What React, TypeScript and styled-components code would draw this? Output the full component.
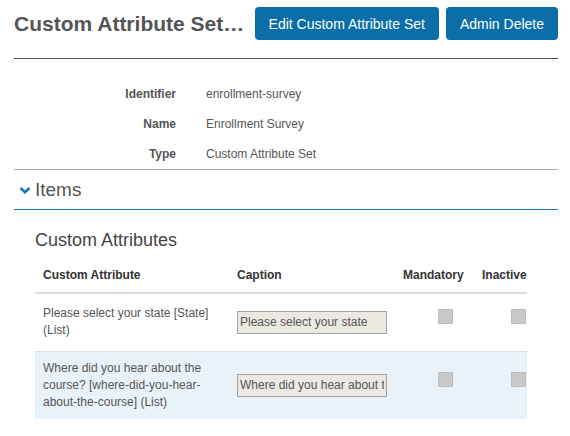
import React from 'react'
import styled, { createGlobalStyle } from 'styled-components'

const GlobalStyle = createGlobalStyle`
  body {
    margin: 0;
    background: #fff;
    font-family: 'Liberation Sans', Arial, sans-serif;
    color: #555;
  }
`

const Page = styled.div`
  padding: 7px 12px 0 14px;
`
const Header = styled.div`
  display: flex;
  align-items: center;
  gap: 7px;
`
const Title = styled.h1`
  flex: 1;
  min-width: 0;
  margin: 0 2px 0 0;
  font-size: 21px;
  font-weight: bold;
  color: #555;
  white-space: nowrap;
  overflow: hidden;
  text-overflow: ellipsis;
`
const ActionButton = styled.button`
  height: 33px;
  padding: 0 14px;
  border: none;
  border-radius: 4px;
  background-color: #0b6ea8;
  color: #fff;
  font-family: inherit;
  font-size: 14px;
  white-space: nowrap;
`
const Divider = styled.hr`
  margin: 18px 0 0 0;
  border: none;
  border-top: 1px solid #555;
`
const Details = styled.dl`
  display: grid;
  grid-template-columns: 162px 1fr;
  grid-auto-rows: 30px;
  column-gap: 30px;
  margin: 20px 0 0 0;
  font-size: 12px;
`
const Label = styled.dt`
  display: flex;
  align-items: center;
  justify-content: flex-end;
  font-weight: bold;
`
const Value = styled.dd`
  display: flex;
  align-items: center;
  margin: 0;
`
const SectionHeader = styled.div`
  display: flex;
  align-items: center;
  gap: 4px;
  height: 39px;
  border-top: 1px solid #aaa;
  border-bottom: 1px solid #1a78b4;
  padding-left: 5px;
  font-size: 19px;
  color: #555;
`
const Section = styled.div`
  padding: 20px 31px 0 21px;
`
const SubHeading = styled.h2`
  margin: 0 0 8px 0;
  font-size: 18px;
  line-height: 20px;
  font-weight: normal;
  color: #444;
`
const Table = styled.table`
  width: 100%;
  border-collapse: collapse;
  table-layout: fixed;
  font-size: 12px;
`
const HeadCell = styled.th<{ $w?: number }>`
  ${p => (p.$w ? `width: ${p.$w}px;` : '')}
  box-sizing: border-box;
  padding: 9px 8px 8px 8px;
  line-height: 17px;
  text-align: left;
  font-weight: bold;
  color: #333;
  border-bottom: 2px solid #ddd;
`
const Row = styled.tr<{ $striped?: boolean }>`
  background-color: ${p => (p.$striped ? '#eaf2f9' : 'transparent')};
  border-top: 1px solid #ddd;
`
const Cell = styled.td<{ $indent?: number }>`
  height: 58px;
  box-sizing: border-box;
  padding: 8px 8px 8px ${p => p.$indent ?? 8}px;
  line-height: 17px;
  vertical-align: middle;
  color: #555;
`
const CaptionInput = styled.input`
  display: block;
  box-sizing: border-box;
  width: 150px;
  height: 23px;
  padding: 0 2px;
  border: 1px solid #a3a3a3;
  background-color: #ebe9e1;
  font-family: inherit;
  font-size: 12px;
  color: #555;
  outline: none;
`
const Check = styled.span`
  display: block;
  width: 15px;
  height: 15px;
  box-sizing: border-box;
  margin-bottom: 12px;
  background-color: #c9c9c9;
  border: 1px solid #bdbdbd;
`

const Chevron = () => (
  <svg width='12' height='10' viewBox='0 0 12 10'>
    <path d='M1.5 3 L6 7.2 L10.5 3' fill='none' stroke='#1b75b5' strokeWidth='2.6' />
  </svg>
)

const attributes = [
  {
    name: 'Please select your state [State] (List)',
    caption: 'Please select your state',
  },
  {
    name: 'Where did you hear about the course? [where-did-you-hear-about-the-course] (List)',
    caption: 'Where did you hear about the course?',
  },
]

const App: React.FC = () => (
  <>
    <GlobalStyle />
    <Page>
      <Header>
        <Title>Custom Attribute Set: Enrollment Survey</Title>
        <ActionButton type='button'>Edit Custom Attribute Set</ActionButton>
        <ActionButton type='button'>Admin Delete</ActionButton>
      </Header>
      <Divider />
      <Details>
        <Label>Identifier</Label>
        <Value>enrollment-survey</Value>
        <Label>Name</Label>
        <Value>Enrollment Survey</Value>
        <Label>Type</Label>
        <Value>Custom Attribute Set</Value>
      </Details>
      <SectionHeader>
        <Chevron />
        Items
      </SectionHeader>
      <Section>
        <SubHeading>Custom Attributes</SubHeading>
        <Table>
          <thead>
            <tr>
              <HeadCell $w={194}>Custom Attribute</HeadCell>
              <HeadCell $w={166}>Caption</HeadCell>
              <HeadCell $w={79}>Mandatory</HeadCell>
              <HeadCell>Inactive</HeadCell>
            </tr>
          </thead>
          <tbody>
            {attributes.map((a, i) => (
              <Row key={a.caption} $striped={i % 2 === 1}>
                <Cell>{a.name}</Cell>
                <Cell>
                  <CaptionInput type='text' defaultValue={a.caption} />
                </Cell>
                <Cell $indent={43}>
                  <Check />
                </Cell>
                <Cell $indent={37}>
                  <Check />
                </Cell>
              </Row>
            ))}
          </tbody>
        </Table>
      </Section>
    </Page>
  </>
)

export default App
